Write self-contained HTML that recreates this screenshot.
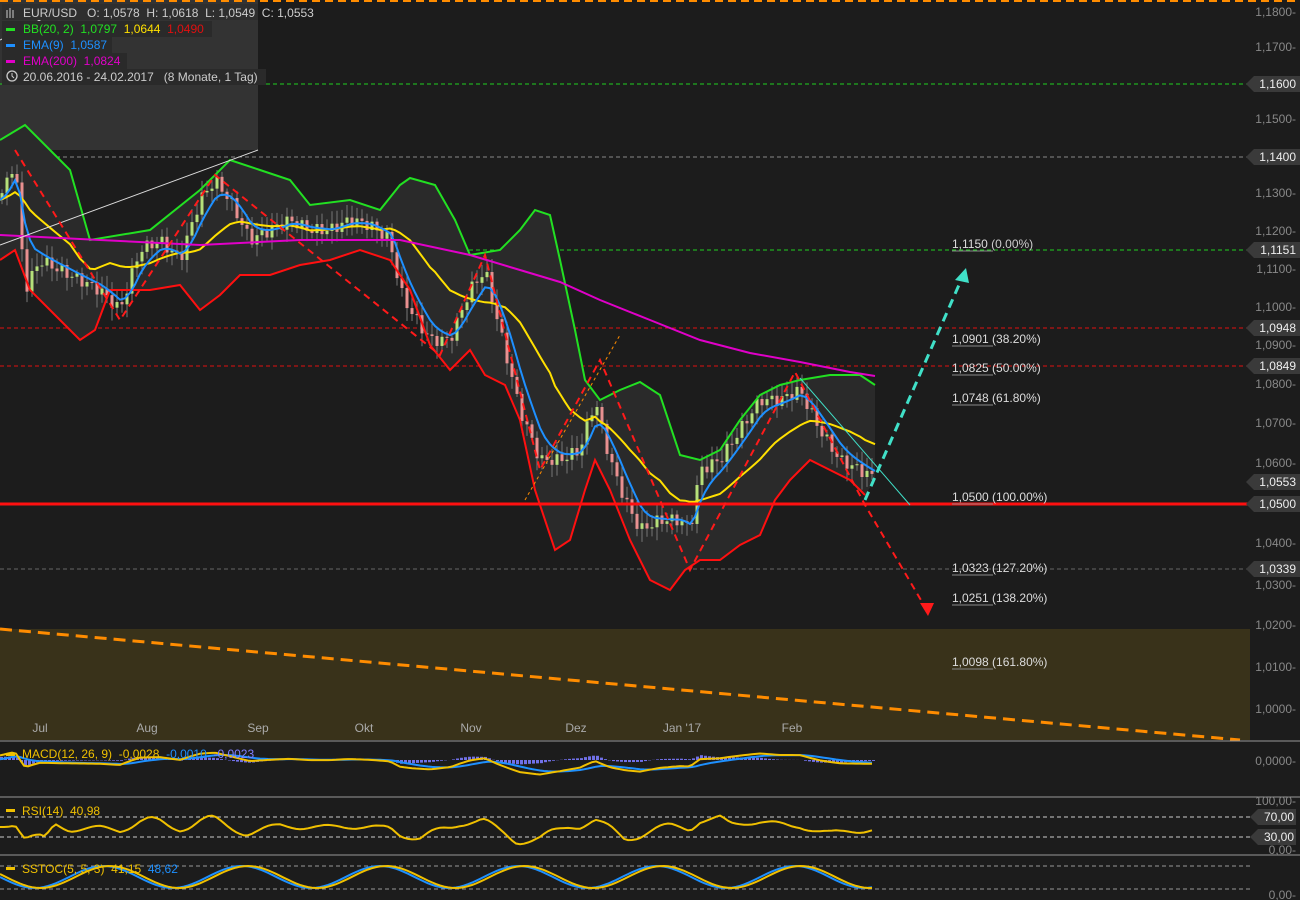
<!DOCTYPE html><html><head><meta charset="utf-8"><style>
body{margin:0;background:#1c1c1c;width:1300px;height:900px;overflow:hidden;font-family:"Liberation Sans",sans-serif}
svg{display:block}
text{font-family:"Liberation Sans",sans-serif;white-space:pre}
</style></head><body>
<svg id="s" width="1300" height="900" xmlns="http://www.w3.org/2000/svg">
<rect width="1300" height="900" fill="#1c1c1c"/>
<rect x="0" y="629" width="1250" height="111" fill="#39321a"/>
<rect x="0" y="0" width="258" height="150" fill="#333"/>
<line x1="0" y1="1" x2="1300" y2="1" stroke="#ff8c00" stroke-width="2" stroke-dasharray="8,5"/>
<g stroke-dasharray="4,3" stroke-width="1">
<line x1="0" y1="84" x2="1250" y2="84" stroke="#1fd01f"/>
<line x1="0" y1="157" x2="1250" y2="157" stroke="#888"/>
<line x1="0" y1="250" x2="1250" y2="250" stroke="#1fd01f"/>
<line x1="0" y1="328" x2="1250" y2="328" stroke="#e01010"/>
<line x1="0" y1="366" x2="1250" y2="366" stroke="#e01010"/>
<line x1="0" y1="569" x2="1250" y2="569" stroke="#666"/>
</g>
<polygon id="band" fill="#2a2a2a"/>
<g id="candles"></g>
<polyline id="up" fill="none" stroke="#22e022" stroke-width="2"/>
<polyline id="lo" fill="none" stroke="#ff1010" stroke-width="2"/>
<polyline id="mid" fill="none" stroke="#ffe000" stroke-width="2"/>
<polyline id="ema9" fill="none" stroke="#1e90ff" stroke-width="2"/>
<polyline id="ema200" fill="none" stroke="#e000c8" stroke-width="2" points="0,235 100,240 200,245 300,240 400,240 470,255 520,270 560,282 600,300 650,320 700,340 750,353 800,362 850,372 875,376"/>
<line x1="0" y1="504" x2="1250" y2="504" stroke="#ff1010" stroke-width="3"/>
<line x1="0" y1="629" x2="1240" y2="740" stroke="#ff8c00" stroke-width="3" stroke-dasharray="12,7"/>
<line x1="0" y1="245" x2="258" y2="150" stroke="#ddd" stroke-width="1"/>
<line x1="0" y1="40" x2="60" y2="10" stroke="#ddd" stroke-width="1"/>
<polyline fill="none" stroke="#ff1a1a" stroke-width="2" stroke-dasharray="7,5" points="15,150 120,320 215,175 440,355 485,255 540,470 600,360 690,570 795,372 865,505 928,612"/>
<polygon points="928,616 920,603 934,603" fill="#ff1a1a"/>
<line x1="865" y1="500" x2="962" y2="278" stroke="#40e0c8" stroke-width="3" stroke-dasharray="9,6"/>
<polygon points="966,268 955,280 969,283" fill="#40e0c8"/>
<line x1="800" y1="378" x2="910" y2="505" stroke="#40e0c8" stroke-width="1"/>
<line x1="525" y1="500" x2="620" y2="335" stroke="#ff8c00" stroke-width="1" stroke-dasharray="3,3"/>
<g fill="#ddd" font-size="12">
<text x="952" y="248">1,1150 <tspan fill="#ccc">(0.00%)</tspan></text>
<text x="952" y="343">1,0901 (38.20%)</text>
<text x="952" y="372">1,0825 (50.00%)</text>
<text x="952" y="402">1,0748 (61.80%)</text>
<text x="952" y="501">1,0500 (100.00%)</text>
<text x="952" y="572">1,0323 (127.20%)</text>
<text x="952" y="602">1,0251 (138.20%)</text>
<text x="952" y="666">1,0098 (161.80%)</text>
</g>
<g stroke="#888" stroke-width="1">
<line x1="952" y1="251" x2="993" y2="251"/><line x1="952" y1="346" x2="993" y2="346"/><line x1="952" y1="375" x2="993" y2="375"/><line x1="952" y1="405" x2="993" y2="405"/><line x1="952" y1="504" x2="993" y2="504"/><line x1="952" y1="575" x2="993" y2="575"/><line x1="952" y1="605" x2="993" y2="605"/><line x1="952" y1="669" x2="993" y2="669"/>
</g>
<g id="axis" font-size="12" fill="#888" text-anchor="end"></g>
<g fill="#aaa" font-size="12" text-anchor="middle">
<text x="40" y="732">Jul</text><text x="147" y="732">Aug</text><text x="258" y="732">Sep</text><text x="364" y="732">Okt</text><text x="471" y="732">Nov</text><text x="576" y="732">Dez</text><text x="682" y="732">Jan '17</text><text x="792" y="732">Feb</text>
</g>
<line x1="0" y1="741" x2="1300" y2="741" stroke="#999"/>
<line x1="0" y1="797" x2="1300" y2="797" stroke="#999"/>
<line x1="0" y1="855" x2="1300" y2="855" stroke="#999"/>
<g id="macd"></g>
<line x1="0" y1="817" x2="1250" y2="817" stroke="#ccc" stroke-dasharray="4,3"/>
<line x1="0" y1="837" x2="1250" y2="837" stroke="#ccc" stroke-dasharray="4,3"/>
<line x1="0" y1="866" x2="1250" y2="866" stroke="#999" stroke-dasharray="4,3"/>
<line x1="0" y1="889" x2="1250" y2="889" stroke="#999" stroke-dasharray="4,3"/>
<polyline id="rsi" fill="none" stroke="#f0c000" stroke-width="2"/>
<polyline id="macd1" fill="none" stroke="#1e90ff" stroke-width="2"/>
<polyline id="macd2" fill="none" stroke="#f0c000" stroke-width="2"/>
<polyline id="st1" fill="none" stroke="#1e90ff" stroke-width="2"/>
<polyline id="st2" fill="none" stroke="#f0c000" stroke-width="2"/>
<g font-size="12" fill="#888" text-anchor="end">
<text x="1296" y="765">0,0000-</text><text x="1296" y="805">100,00-</text><text x="1296" y="854">0,00-</text><text x="1296" y="899">0,00-</text>
</g>
<polygon points="1250,817 1258,809 1296,809 1296,825 1258,825" fill="#3a3a3a"/>
<polygon points="1250,837 1258,829 1296,829 1296,845 1258,845" fill="#3a3a3a"/>
<text x="1294" y="821" font-size="12" fill="#eee" text-anchor="end">70,00</text>
<text x="1294" y="841" font-size="12" fill="#eee" text-anchor="end">30,00</text>
<g font-size="12">
<rect x="6" y="753" width="9" height="3" fill="#f0c000"/><text x="22" y="758" fill="#f0c000">MACD(12, 26, 9)  -0,0028  <tspan fill="#1e90ff">-0,0010</tspan>  <tspan fill="#8080ff">-0,0023</tspan></text>
<rect x="6" y="809" width="9" height="3" fill="#f0c000"/><text x="22" y="815" fill="#f0c000">RSI(14)  40,98</text>
<rect x="6" y="867" width="9" height="3" fill="#f0c000"/><text x="22" y="873" fill="#f0c000">SSTOC(5, 5, 3)  41,15  <tspan fill="#1e90ff">48,62</tspan></text>
</g>
<rect x="2" y="4" width="256" height="16" fill="#2e2e2e"/>
<rect x="2" y="21" width="210" height="16" fill="#2a2a2a"/>
<rect x="2" y="37" width="110" height="16" fill="#2a2a2a"/>
<rect x="2" y="53" width="125" height="16" fill="#2a2a2a"/>
<rect x="2" y="69" width="264" height="16" fill="#2a2a2a"/>
<g font-size="12">
<g stroke="#ccc" stroke-width="1"><line x1="7" y1="10" x2="7" y2="18"/><line x1="10" y1="8" x2="10" y2="18"/><line x1="13" y1="10" x2="13" y2="18"/></g>
<text x="23" y="17" fill="#ccc">EUR/USD   O: 1,0578  H: 1,0618  L: 1,0549  C: 1,0553</text>
<rect x="6" y="28" width="9" height="3" fill="#22e022"/><text x="23" y="33" fill="#22e022">BB(20, 2)  1,0797  <tspan fill="#ffe000">1,0644</tspan>  <tspan fill="#e01010">1,0490</tspan></text>
<rect x="6" y="44" width="9" height="3" fill="#1e90ff"/><text x="23" y="49" fill="#1e90ff">EMA(9)  1,0587</text>
<rect x="6" y="60" width="9" height="3" fill="#e000c8"/><text x="23" y="65" fill="#e000c8">EMA(200)  1,0824</text>
<circle cx="12" cy="76" r="5" fill="none" stroke="#ccc" stroke-width="1.3"/><path d="M12 73v3l2 2" stroke="#ccc" fill="none"/>
<text x="23" y="81" fill="#ccc">20.06.2016 - 24.02.2017   (8 Monate, 1 Tag)</text>
</g>
</svg>
<script>
var NS="http://www.w3.org/2000/svg",s=document.getElementById('s');
function el(t,a,p){var e=document.createElementNS(NS,t);for(var k in a)e.setAttribute(k,a[k]);(p||s).appendChild(e);return e;}
function interp(pts,x){if(x<=pts[0][0])return pts[0][1];for(var i=0;i<pts.length-1;i++){if(x>=pts[i][0]&&x<=pts[i+1][0]){var t=(x-pts[i][0])/(pts[i+1][0]-pts[i][0]);return pts[i][1]+t*(pts[i+1][1]-pts[i][1]);}}return pts[pts.length-1][1];}
var price=[[0,200],[15,160],[25,290],[40,260],[60,270],[80,280],[100,290],[120,310],[140,250],[160,240],[180,260],[200,200],[215,180],[230,200],[250,240],[270,230],[290,220],[310,230],[330,230],[350,220],[370,225],[390,240],[400,290],[410,310],[430,340],[450,340],[470,290],[485,270],[500,330],[520,410],[540,460],[560,460],[580,450],[595,400],[610,460],[625,500],[640,530],[660,520],[680,520],[690,530],[700,470],[720,460],[740,430],[760,400],[780,400],[800,390],[820,430],[840,460],[860,470],[875,478]];
var up=[[0,140],[25,125],[50,150],[70,170],[90,240],[150,230],[200,190],[230,160],[260,170],[290,180],[310,205],[350,200],[380,210],[400,185],[410,178],[435,185],[455,220],[470,255],[500,250],[520,230],[535,210],[550,215],[560,260],[575,330],[585,380],[600,400],[620,390],[640,382],[660,395],[680,455],[700,460],[720,450],[740,420],[760,395],[780,385],[800,380],[830,375],[860,375],[875,385]];
var lo=[[0,260],[15,250],[30,290],[60,320],[80,340],[95,330],[110,290],[150,290],[180,285],[200,310],[220,295],[240,275],[270,275],[300,265],[330,260],[360,250],[390,260],[410,290],[430,345],[450,370],[470,350],[485,375],[505,385],[520,420],[535,490],[555,550],[570,540],[585,490],[595,460],[610,490],[630,540],[650,580],[670,590],[685,570],[700,560],[720,560],[740,545],[760,535],[775,500],[790,480],[810,460],[830,470],[850,480],[865,495]];
function str(a){return a.map(function(p){return p[0]+','+p[1].toFixed(1)}).join(' ');}
document.getElementById('up').setAttribute('points',str(up));
document.getElementById('lo').setAttribute('points',str(lo));
document.getElementById('band').setAttribute('points',str(up.concat([[875,480]]).concat(lo.slice().reverse())));
var mid=[],e9=[],m=200,e=200;
for(var x=0;x<=875;x+=5){var p=interp(price,x);m+= (p-m)*0.08;e+=(p-e)*0.3;mid.push([x,(interp(up,x)+interp(lo,x))/2*0.5+m*0.5]);e9.push([x,e]);}
document.getElementById('mid').setAttribute('points',str(mid));
document.getElementById('ema9').setAttribute('points',str(e9));
var cg=document.getElementById('candles'),prev=200;
for(var x=2;x<=875;x+=5){var c=interp(price,x)+Math.sin(x*1.7)*6,o=prev;var hi=Math.min(o,c)-3-Math.abs(Math.sin(x*3.1))*10,lw=Math.max(o,c)+3+Math.abs(Math.cos(x*2.3))*10;
el('line',{x1:x,y1:hi,x2:x,y2:lw,stroke:'#777','stroke-width':1},cg);
el('rect',{x:x-1.5,y:Math.min(o,c),width:3,height:Math.max(1,Math.abs(c-o)),fill:c<o?'#b6e07a':'#e89090'},cg);prev=c;}
var ax=document.getElementById('axis');
var labs=[[12,'1,1800'],[47,'1,1700'],[119,'1,1500'],[193,'1,1300'],[231,'1,1200'],[269,'1,1100'],[307,'1,1000'],[345,'1,0900'],[384,'1,0800'],[423,'1,0700'],[463,'1,0600'],[543,'1,0400'],[585,'1,0300'],[625,'1,0200'],[667,'1,0100'],[709,'1,0000']];
labs.forEach(function(l){var t=el('text',{x:1296,y:l[0]+4},ax);t.textContent=l[1]+'-';});
[[84,'1,1600'],[157,'1,1400'],[250,'1,1151'],[328,'1,0948'],[366,'1,0849'],[482,'1,0553'],[504,'1,0500'],[569,'1,0339']].forEach(function(l){
el('polygon',{points:'1246,'+l[0]+' 1254,'+(l[0]-8)+' 1300,'+(l[0]-8)+' 1300,'+(l[0]+8)+' 1254,'+(l[0]+8),fill:'#3a3a3a'});
var t=el('text',{x:1296,y:l[0]+4,'font-size':12,fill:'#eee','text-anchor':'end'});t.textContent=l[1];});
var mg=document.getElementById('macd'),a=[],b=[],r=[],s1=[],s2=[];
var pe=240,sig=0;
for(var x=0;x<=875;x+=4){var p=interp(price,x);pe+=(p-pe)*0.05;var f=(p-pe)*0.12;sig+=(f-sig)*0.15;
var mv=760+f,sv=760+sig;a.push([x,sv]);b.push([x,mv]);
var h=(mv-sv)*0.8;el('rect',{x:x,y:Math.min(760,760+h),width:3,height:Math.abs(h),fill:'#7070e8'},mg);
r.push([x,827+(interp(price,x)-interp(price,x-30))*0.12+3*Math.sin(x/9)]);
s1.push([x,877+11*Math.sin(x/22)]);s2.push([x,877+11*Math.sin((x-6)/22)]);}
document.getElementById('macd1').setAttribute('points',str(a));
document.getElementById('macd2').setAttribute('points',str(b));
document.getElementById('rsi').setAttribute('points',str(r));
document.getElementById('st1').setAttribute('points',str(s1));
document.getElementById('st2').setAttribute('points',str(s2));
</script>
</body></html>
